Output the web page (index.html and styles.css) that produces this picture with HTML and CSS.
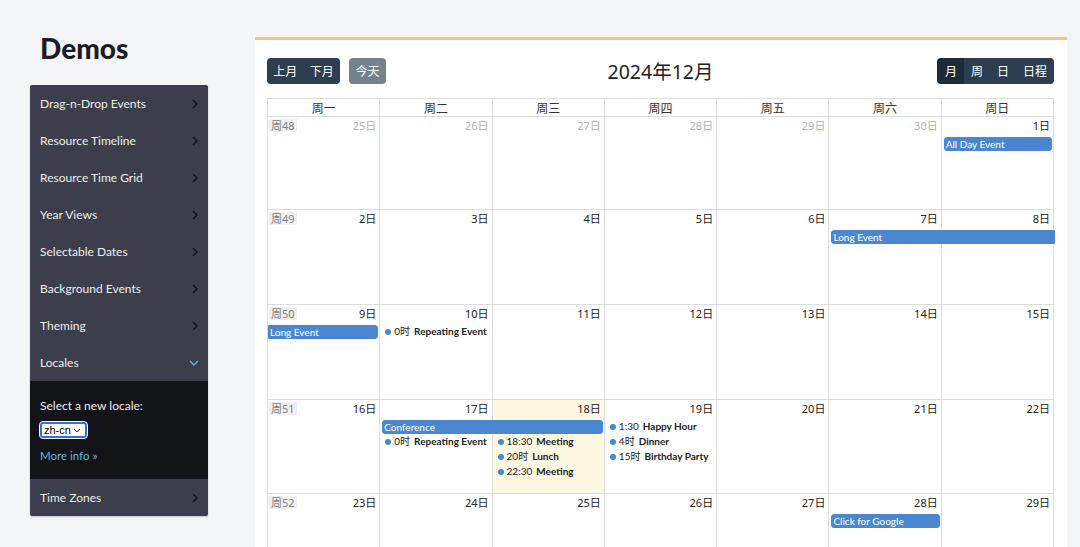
FILE: index.html
```html
<!DOCTYPE html>
<html lang="zh-CN">
<head>
<meta charset="utf-8">
<title>Demos - Locales</title>
<link rel="stylesheet" href="styles.css">
</head>
<body>
<div class="page">
  <aside class="sidebar">
    <h1 class="brand">Demos</h1>
    <nav class="menu">
      <a class="menu-item" href="#">Drag-n-Drop Events<svg class="chev" viewBox="0 0 6 10"><path d="M1 1l4 4-4 4"/></svg></a>
      <a class="menu-item" href="#">Resource Timeline<svg class="chev" viewBox="0 0 6 10"><path d="M1 1l4 4-4 4"/></svg></a>
      <a class="menu-item" href="#">Resource Time Grid<svg class="chev" viewBox="0 0 6 10"><path d="M1 1l4 4-4 4"/></svg></a>
      <a class="menu-item" href="#">Year Views<svg class="chev" viewBox="0 0 6 10"><path d="M1 1l4 4-4 4"/></svg></a>
      <a class="menu-item" href="#">Selectable Dates<svg class="chev" viewBox="0 0 6 10"><path d="M1 1l4 4-4 4"/></svg></a>
      <a class="menu-item" href="#">Background Events<svg class="chev" viewBox="0 0 6 10"><path d="M1 1l4 4-4 4"/></svg></a>
      <a class="menu-item" href="#">Theming<svg class="chev" viewBox="0 0 6 10"><path d="M1 1l4 4-4 4"/></svg></a>
      <a class="menu-item open" href="#">Locales<svg class="chev-down" viewBox="0 0 10 6"><path d="M1 1l4 4 4-4"/></svg></a>
      <div class="submenu">
        <div class="sub-label">Select a new locale:</div>
        <span class="select-wrap">
          <select class="locale-select"><option>zh-cn</option></select>
          <svg class="select-arrow" viewBox="0 0 8 5"><path d="M1 1l3 3 3-3"/></svg>
        </span>
        <a class="more" href="#">More info »</a>
      </div>
      <a class="menu-item" href="#">Time Zones<svg class="chev" viewBox="0 0 6 10"><path d="M1 1l4 4-4 4"/></svg></a>
    </nav>
  </aside>

  <main class="cal-panel">
    <div class="toolbar">
      <div class="tb-left">
        <div class="btn-group">
          <button class="btn">上月</button>
          <button class="btn">下月</button>
        </div>
        <button class="btn btn-disabled">今天</button>
      </div>
      <h2 class="title">2024年12月</h2>
      <div class="btn-group tb-right">
        <button class="btn active">月</button>
        <button class="btn">周</button>
        <button class="btn">日</button>
        <button class="btn">日程</button>
      </div>
    </div>

    <div class="cal">
      <div class="dow">
        <div class="dow-cell">周一</div><div class="dow-cell">周二</div><div class="dow-cell">周三</div><div class="dow-cell">周四</div><div class="dow-cell">周五</div><div class="dow-cell">周六</div><div class="dow-cell">周日</div>
      </div>

      <div class="week w1">
        <div class="cell c1"></div><div class="cell c2"></div><div class="cell c3"></div><div class="cell c4"></div><div class="cell c5"></div><div class="cell c6"></div><div class="cell c7"></div>
        <div class="num c1 other"><span class="wk">周48</span><span>25日</span></div>
        <div class="num c2 other"><span>26日</span></div>
        <div class="num c3 other"><span>27日</span></div>
        <div class="num c4 other"><span>28日</span></div>
        <div class="num c5 other"><span>29日</span></div>
        <div class="num c6 other"><span>30日</span></div>
        <div class="num c7"><span>1日</span></div>
        <div class="bar c7 r2">All Day Event</div>
      </div>

      <div class="week w2">
        <div class="cell c1"></div><div class="cell c2"></div><div class="cell c3"></div><div class="cell c4"></div><div class="cell c5"></div><div class="cell c6"></div><div class="cell c7"></div>
        <div class="num c1"><span class="wk">周49</span><span>2日</span></div>
        <div class="num c2"><span>3日</span></div>
        <div class="num c3"><span>4日</span></div>
        <div class="num c4"><span>5日</span></div>
        <div class="num c5"><span>6日</span></div>
        <div class="num c6"><span>7日</span></div>
        <div class="num c7"><span>8日</span></div>
        <div class="bar c6 s2 r2 cont-r">Long Event</div>
      </div>

      <div class="week w3">
        <div class="cell c1"></div><div class="cell c2"></div><div class="cell c3"></div><div class="cell c4"></div><div class="cell c5"></div><div class="cell c6"></div><div class="cell c7"></div>
        <div class="num c1"><span class="wk">周50</span><span>9日</span></div>
        <div class="num c2"><span>10日</span></div>
        <div class="num c3"><span>11日</span></div>
        <div class="num c4"><span>12日</span></div>
        <div class="num c5"><span>13日</span></div>
        <div class="num c6"><span>14日</span></div>
        <div class="num c7"><span>15日</span></div>
        <div class="bar c1 r2 cont-l">Long Event</div>
        <div class="dot-ev c2 r2">0时 <b>Repeating Event</b></div>
      </div>

      <div class="week w4">
        <div class="cell c1"></div><div class="cell c2"></div><div class="cell c3 today"></div><div class="cell c4"></div><div class="cell c5"></div><div class="cell c6"></div><div class="cell c7"></div>
        <div class="num c1"><span class="wk">周51</span><span>16日</span></div>
        <div class="num c2"><span>17日</span></div>
        <div class="num c3"><span>18日</span></div>
        <div class="num c4"><span>19日</span></div>
        <div class="num c5"><span>20日</span></div>
        <div class="num c6"><span>21日</span></div>
        <div class="num c7"><span>22日</span></div>
        <div class="bar c2 s2 r2">Conference</div>
        <div class="dot-ev c2 r3">0时 <b>Repeating Event</b></div>
        <div class="dot-ev c3 r3">18:30 <b>Meeting</b></div>
        <div class="dot-ev c3 r4">20时 <b>Lunch</b></div>
        <div class="dot-ev c3 r5">22:30 <b>Meeting</b></div>
        <div class="dot-ev c4 r2">1:30 <b>Happy Hour</b></div>
        <div class="dot-ev c4 r3">4时 <b>Dinner</b></div>
        <div class="dot-ev c4 r4">15时 <b>Birthday Party</b></div>
      </div>

      <div class="week w5">
        <div class="cell c1"></div><div class="cell c2"></div><div class="cell c3"></div><div class="cell c4"></div><div class="cell c5"></div><div class="cell c6"></div><div class="cell c7"></div>
        <div class="num c1"><span class="wk">周52</span><span>23日</span></div>
        <div class="num c2"><span>24日</span></div>
        <div class="num c3"><span>25日</span></div>
        <div class="num c4"><span>26日</span></div>
        <div class="num c5"><span>27日</span></div>
        <div class="num c6"><span>28日</span></div>
        <div class="num c7"><span>29日</span></div>
        <div class="bar c6 r2">Click for Google</div>
      </div>
    </div>
  </main>
</div>
</body>
</html>
```

FILE: styles.css
```css
* { box-sizing: border-box; }

html, body {
  margin: 0;
  height: 547px;
  overflow: hidden;
}

body {
  background: #f4f5f7;
  font-family: Lato, "Noto Sans CJK SC", sans-serif;
  color: #222;
}

.page {
  display: flex;
  align-items: flex-start;
  padding-left: 30px;
  gap: 47px;
}

/* Sidebar */
.sidebar {
  width: 178px;
  flex: none;
}

.brand {
  margin: 0;
  height: 85px;
  padding: 31px 10px 0;
  font-size: 28px;
  line-height: 34px;
  font-weight: 900;
  color: #1c1d24;
}

.menu {
  background: #3c3f4b;
  border-radius: 2px;
  box-shadow: 0 1px 2px rgba(0, 0, 0, .2);
  overflow: hidden;
}

.menu-item {
  display: flex;
  align-items: center;
  justify-content: space-between;
  height: 37px;
  padding: 0 10px;
  color: #ececec;
  font-size: 12px;
  text-decoration: none;
}

.chev {
  width: 6px;
  height: 10px;
  margin-right: 0;
  fill: none;
  stroke: #121317;
  stroke-width: 1.4;
}

.chev-down {
  width: 10px;
  height: 6px;
  margin-right: -1px;
  fill: none;
  stroke: #5fb9e0;
  stroke-width: 1.3;
}

.submenu {
  background: #131418;
  height: 98px;
  padding: 18px 10px 0;
  color: #ececec;
  font-size: 12px;
}

.sub-label {
  line-height: 14px;
  margin-bottom: 9px;
}

.select-wrap {
  position: relative;
  display: block;
  width: 47px;
  height: 16px;
  margin-bottom: 10px;
}

.locale-select {
  appearance: none;
  -webkit-appearance: none;
  display: block;
  width: 47px;
  height: 16px;
  padding: 0 0 0 2px;
  font-family: "Liberation Sans", sans-serif;
  font-size: 11px;
  line-height: 12px;
  color: #000;
  background: #fff;
  border: 2px solid #2f6fe0;
  border-radius: 3px;
  outline: 1px solid #fff;
}

.select-arrow {
  position: absolute;
  right: 6px;
  top: 6px;
  width: 8px;
  height: 5px;
  fill: none;
  stroke: #222;
  stroke-width: 1;
  pointer-events: none;
}

.more {
  color: #5fb9e0;
  text-decoration: none;
  font-size: 11.5px;
}

/* Calendar panel */
.cal-panel {
  width: 812px;
  flex: none;
  margin-top: 37px;
  min-height: 520px;
  background: #fff;
  border-top: 3px solid #f3c66f;
  padding: 16px 13px 0 12px;
}

.toolbar {
  display: grid;
  grid-template-columns: 1fr auto 1fr;
  align-items: center;
  height: 26px;
  margin-bottom: 16px;
}

.tb-left {
  display: flex;
  gap: 9px;
}

.tb-right {
  justify-self: end;
}

.btn-group {
  display: flex;
  border-radius: 4px;
  overflow: hidden;
}

.btn {
  height: 26px;
  padding: 0 6px;
  border: 0;
  background: #2c3e50;
  color: #fff;
  font-family: "Noto Sans CJK SC", sans-serif;
  font-size: 12px;
  line-height: 26px;
}

.tb-left .btn-group .btn { width: 36.5px; padding: 0; }
.btn-disabled { opacity: .65; border-radius: 4px; width: 37px; padding: 0; }
.tb-right .btn { padding: 0 7px; }
.tb-right .btn.active { padding: 0 7px 0 8px; }
.btn.active { background: #1e2b37; }

.title {
  margin: 0;
  font-family: "Noto Sans", "Noto Sans CJK SC", sans-serif;
  font-weight: 400;
  font-size: 19.5px;
  color: #222;
}

.cal {
  width: 787px;
  border-left: 1px solid #ddd;
  border-top: 1px solid #ddd;
}

.dow {
  display: grid;
  grid-template-columns: repeat(7, 1fr);
}

.dow-cell {
  height: 18px;
  line-height: 17px;
  text-align: center;
  font-family: "Noto Sans CJK SC", sans-serif;
  font-size: 12px;
  color: #333;
  border-right: 1px solid #ddd;
  border-bottom: 1px solid #ddd;
}

.week {
  display: grid;
  grid-template-columns: repeat(7, 1fr);
  grid-template-rows: 19px 15px 15px 15px 15px 1fr;
  height: 95px;
}

.week.w1 { height: 93px; }
.week.w4 { height: 94px; }

.cell {
  grid-row: 1 / -1;
  border-right: 1px solid #ddd;
  border-bottom: 1px solid #ddd;
}

.cell.today { background: #fef8e3; }

.c1 { grid-column: 1; }
.c2 { grid-column: 2; }
.c3 { grid-column: 3; }
.c4 { grid-column: 4; }
.c5 { grid-column: 5; }
.c6 { grid-column: 6; }
.c7 { grid-column: 7; }
.s2 { grid-column-end: span 2; }
.r2 { grid-row: 2; }
.r3 { grid-row: 3; }
.r4 { grid-row: 4; }
.r5 { grid-row: 5; }

.num {
  grid-row: 1;
  display: flex;
  justify-content: space-between;
  align-items: flex-start;
  padding: 2px 4px 0 1px;
  font-family: "Noto Sans", "Noto Sans CJK SC", sans-serif;
  font-size: 11px;
  line-height: 14px;
  color: #222;
}

.num span:last-child { margin-left: auto; }
.num.other span { color: #b4b4b4; }

.num .wk {
  margin-left: 0;
  padding: 0 2px;
  background: #efefef;
  color: #808080;
  border-radius: 0 0 3px 0;
  line-height: 13px;
}

.num.other .wk { color: #808080; }

.bar {
  align-self: start;
  height: 14px;
  margin: 1px 2px 0;
  padding-left: 1px;
  background: #4a87d0;
  border: 1px solid #4a87d0;
  border-radius: 3px;
  color: #fff;
  font-size: 10px;
  line-height: 12px;
  white-space: nowrap;
  overflow: hidden;
}

.bar.cont-r { margin-right: -1px; border-radius: 3px 0 0 3px; }
.bar.cont-l { margin-left: 0; border-radius: 0 3px 3px 0; }

.dot-ev {
  display: flex;
  align-items: center;
  gap: 3px;
  padding-left: 5px;
  font-size: 10px;
  line-height: 15px;
  color: #222;
  white-space: nowrap;
  overflow: hidden;
}

.dot-ev::before {
  content: "";
  width: 6px;
  height: 6px;
  border-radius: 50%;
  background: #4a87d0;
  flex: none;
}

.dot-ev b {
  font-weight: 700;
  margin-left: 1px;
}
```
